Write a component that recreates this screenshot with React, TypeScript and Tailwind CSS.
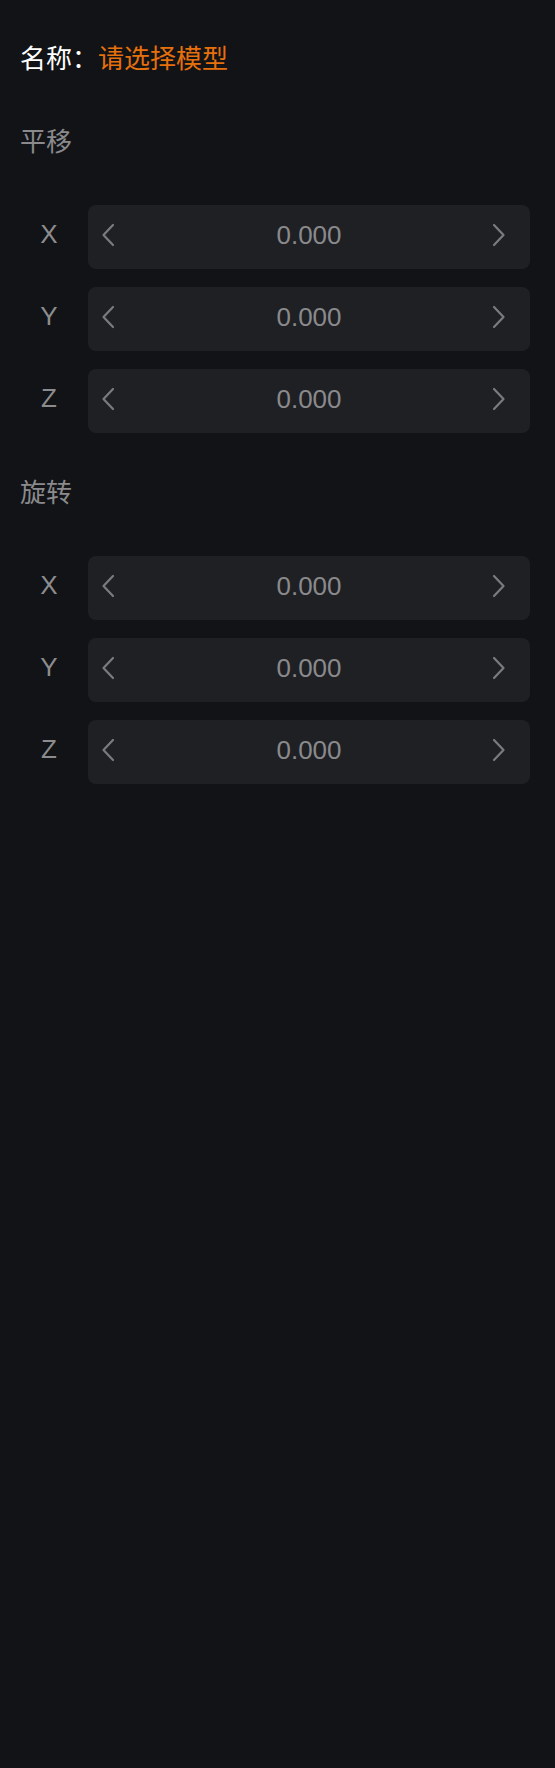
const font = { fontFamily: '"Liberation Sans", "Noto Sans CJK SC", sans-serif' }

type Axis = 'X' | 'Y' | 'Z'

function Chevron({ dir }: { dir: 'left' | 'right' }) {
  return (
    <svg width="14" height="24" viewBox="0 0 14 24" fill="none">
      <path
        d={dir === 'left' ? 'M12 2 L2.5 12 L12 22' : 'M2 2 L11.5 12 L2 22'}
        stroke="#7b7b7e"
        strokeWidth="2.2"
        strokeLinecap="round"
        strokeLinejoin="round"
      />
    </svg>
  )
}

function Stepper({ axis, value }: { axis: Axis; value: number }) {
  return (
    <div className="flex items-center">
      <div className="w-[58px] pb-[6px] text-center text-[26px] leading-[36px] text-[#8c8c8e]">{axis}</div>
      <div className="ml-[10px] flex h-[64px] flex-1 items-center rounded-lg bg-[#1f2024]">
        <button className="flex w-[60px] items-center justify-start pb-[4px] pl-[13px]">
          <Chevron dir="left" />
        </button>
        <div className="flex-1 pb-[5px] text-center text-[26px] leading-[36px] text-[#8a8a8c]">
          {value.toFixed(3)}
        </div>
        <button className="flex w-[60px] items-center justify-end pb-[4px] pr-[24px]">
          <Chevron dir="right" />
        </button>
      </div>
    </div>
  )
}

function Section({ title, first }: { title: string; first?: boolean }) {
  const axes: Axis[] = ['X', 'Y', 'Z']
  return (
    <div className={first ? 'mt-[47px]' : 'mt-[42px]'}>
      <h2 className="text-[26px] leading-[36px] font-normal text-[#8a8a8c]">{title}</h2>
      <div className="mt-[45px] flex flex-col gap-[18px]">
        {axes.map((a) => (
          <Stepper key={a} axis={a} value={0} />
        ))}
      </div>
    </div>
  )
}

export default function App() {
  return (
    <div className="min-h-screen w-full bg-[#121317] pl-[20px] pr-[25px] pt-[41px]" style={font}>
      {/* Name */}
      <div className="text-[26px] leading-[36px]">
        <span className="text-white">名称：</span>
        <span className="text-[#e5700c]">请选择模型</span>
      </div>

      <Section title="平移" first />
      <Section title="旋转" />
    </div>
  )
}
